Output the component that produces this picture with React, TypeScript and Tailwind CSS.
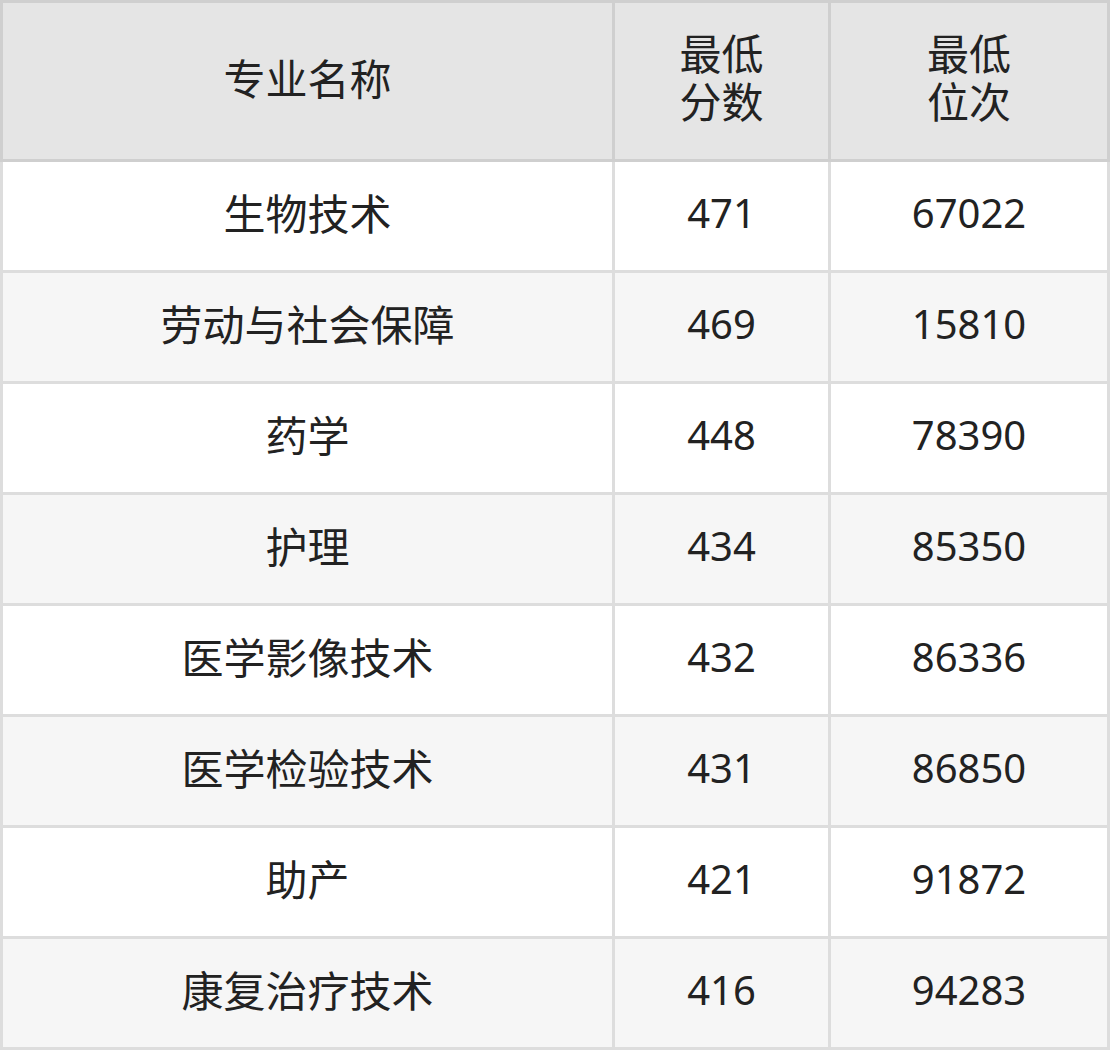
const rows = [
  { name: "生物技术", score: "471", rank: "67022" },
  { name: "劳动与社会保障", score: "469", rank: "15810" },
  { name: "药学", score: "448", rank: "78390" },
  { name: "护理", score: "434", rank: "85350" },
  { name: "医学影像技术", score: "432", rank: "86336" },
  { name: "医学检验技术", score: "431", rank: "86850" },
  { name: "助产", score: "421", rank: "91872" },
  { name: "康复治疗技术", score: "416", rank: "94283" },
];

const font = { fontFamily: '"Noto Sans", "Noto Sans CJK SC", sans-serif' };

const App = () => {
  return (
    <div className="w-[1110px] bg-white text-[#222] text-[40px]" style={font}>
      <div className="grid grid-cols-[615px_216px_279px] border-t-[3px] border-[#cfcfcf] text-[42px]">
        <div className="h-[159px] pb-[6px] flex items-center justify-center bg-[#e5e5e5] border-l-[3px] border-r-[3px] border-b-[3px] border-[#cfcfcf]">
          专业名称
        </div>
        <div className="h-[159px] pb-[6px] flex items-center justify-center text-center leading-[48px] bg-[#e5e5e5] border-r-[3px] border-b-[3px] border-[#cfcfcf]">
          最低<br />分数
        </div>
        <div className="h-[159px] pb-[6px] flex items-center justify-center text-center leading-[48px] bg-[#e5e5e5] border-r-[3px] border-b-[3px] border-[#cfcfcf]">
          最低<br />位次
        </div>
      </div>
      {rows.map((row, i) => (
        <div
          key={i}
          className={`grid grid-cols-[615px_216px_279px] ${i % 2 === 1 ? "bg-[#f6f6f6]" : "bg-white"}`}
        >
          <div className="h-[111px] pb-[6px] flex items-center justify-center text-[42px] border-l-[3px] border-r-[3px] border-b-[3px] border-[#dddddd]">
            {row.name}
          </div>
          <div className="h-[111px] pb-[6px] flex items-center justify-center border-r-[3px] border-b-[3px] border-[#dddddd]">
            {row.score}
          </div>
          <div className="h-[111px] pb-[6px] flex items-center justify-center border-r-[3px] border-b-[3px] border-[#dddddd]">
            {row.rank}
          </div>
        </div>
      ))}
    </div>
  );
};

export default App;
